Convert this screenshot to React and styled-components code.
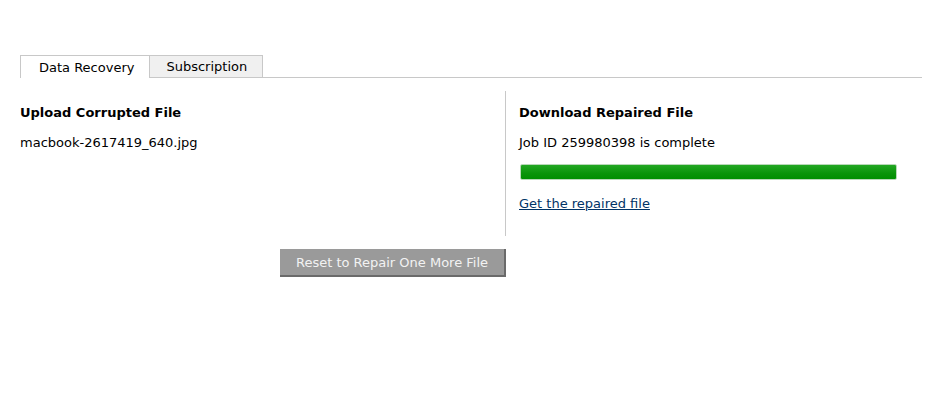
import React from 'react';
import styled, { createGlobalStyle } from 'styled-components';

const GlobalStyle = createGlobalStyle`
  body {
    margin: 0;
    background: #fff;
    font-family: "DejaVu Sans", Verdana, sans-serif;
    font-size: 13px;
    color: #000;
  }
`;

const Page = styled.div`
  width: 902px;
  padding: 55px 0 0 20px;
`;

const Tabs = styled.div`
  display: flex;
  border-bottom: 1px solid #c8c8c8;
  height: 22px;
`;

const Tab = styled.div`
  box-sizing: border-box;
  padding: 0 15px 0 ${ props => props.first ? '18px' : '16px' };
  display: flex;
  align-items: center;
  border: 1px solid #c8c8c8;
  border-bottom: none;
  margin-left: ${ props => props.first ? '0' : '-1px' };
  background: ${ props => props.active ? '#fff' : '#f0f0f0' };
  height: ${ props => props.active ? '23px' : '22px' };
  position: relative;
  z-index: ${ props => props.active ? 1 : 0 };
  cursor: pointer;
`;

const Panels = styled.div`
  display: grid;
  grid-template-columns: 486px 1fr;
  margin-top: 13px;
`;

const Column = styled.div`
  padding: ${ props => props.right ? '0 0 24px 13px' : '0 0 24px 0' };
  border-right: ${ props => props.right ? 'none' : '1px solid #c8c8c8' };
`;

const Heading = styled.h3`
  margin: 14px 0 0;
  font-size: 13px;
  line-height: 16px;
  font-weight: bold;
`;

const Line = styled.p`
  margin: 14px 0 0;
  line-height: 16px;
`;

const Progress = styled.div`
  margin: 13px 0 0 1px;
  width: 377px;
  height: 16px;
  box-sizing: border-box;
  border: 1px solid #b8d8b8;
  border-radius: 2px;
  background: linear-gradient(#22a722, #099409 60%, #008f00);
`;

const Link = styled.a`
  display: block;
  margin-top: 16px;
  line-height: 16px;
  color: #003366;
  text-decoration: underline;
  cursor: pointer;
`;

const Actions = styled.div`
  width: 486px;
  display: flex;
  justify-content: flex-end;
  margin-top: 13px;
`;

const Button = styled.button`
  font-family: inherit;
  font-size: 13px;
  width: 226px;
  height: 28px;
  background: #9a9a9a;
  color: #f2f2f2;
  border: none;
  border-right: 2px solid #6a6a6a;
  border-bottom: 2px solid #6a6a6a;
  padding: 0;
  cursor: pointer;
`;

const App = () => (
  <Page>
    <GlobalStyle />
    <Tabs>
      <Tab first active>Data Recovery</Tab>
      <Tab>Subscription</Tab>
    </Tabs>

    <Panels>
      <Column>
        <Heading>Upload Corrupted File</Heading>
        <Line>macbook-2617419_640.jpg</Line>
      </Column>
      <Column right>
        <Heading>Download Repaired File</Heading>
        <Line>Job ID 259980398 is complete</Line>
        <Progress />
        <Link>Get the repaired file</Link>
      </Column>
    </Panels>

    <Actions>
      <Button>Reset to Repair One More File</Button>
    </Actions>
  </Page>
);

export default App;
